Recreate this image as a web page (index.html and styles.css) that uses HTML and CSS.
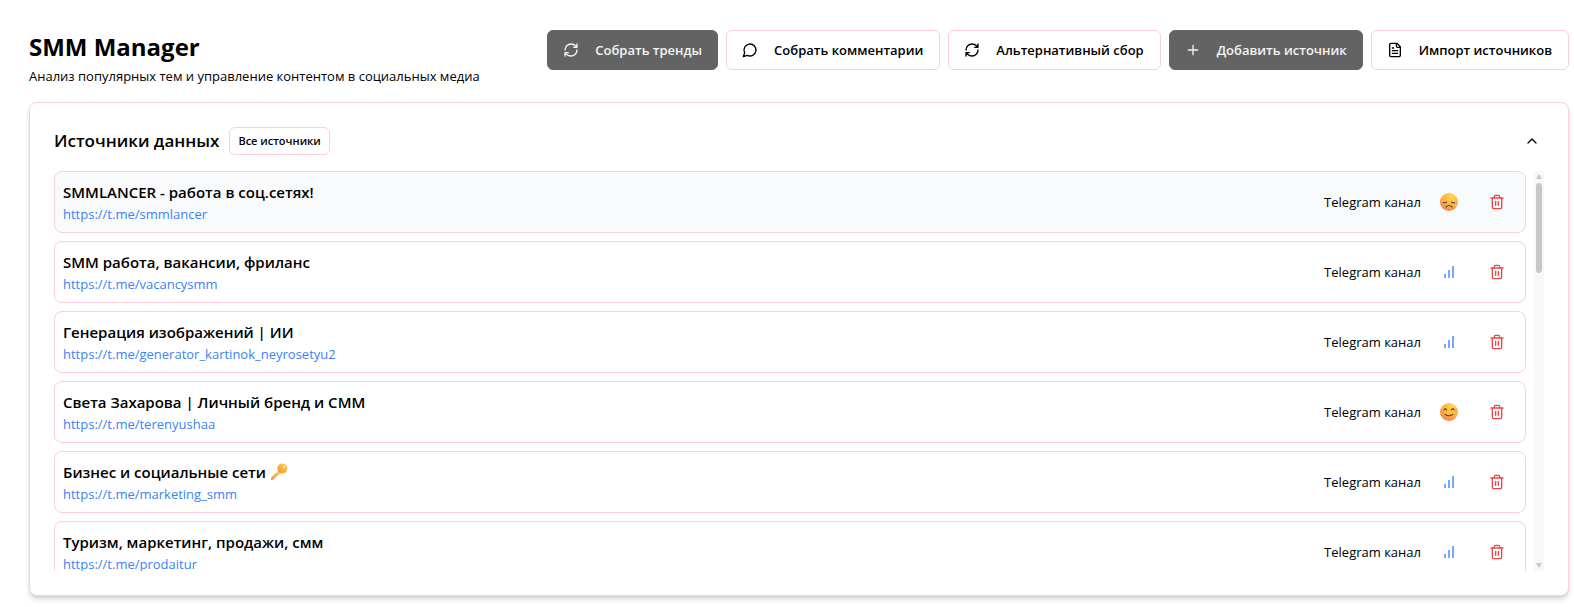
FILE: index.html
```html
<!DOCTYPE html>
<html lang="ru">
<head>
<meta charset="utf-8">
<title>SMM Manager</title>
<link rel="stylesheet" href="styles.css">
</head>
<body>
<svg class="defs" aria-hidden="true">
  <defs>
    <radialGradient id="face" cx="0.65" cy="0.2" r="0.95">
      <stop offset="0" stop-color="#ffd84a"/>
      <stop offset="0.55" stop-color="#fbb03f"/>
      <stop offset="1" stop-color="#ef6c6a"/>
    </radialGradient>
    <linearGradient id="gold" x1="1" y1="0" x2="0" y2="1">
      <stop offset="0" stop-color="#ffdc4a"/>
      <stop offset="0.5" stop-color="#fbb144"/>
      <stop offset="1" stop-color="#f2894e"/>
    </linearGradient>
    <symbol id="refresh" viewBox="0 0 24 24"><path d="M3 12a9 9 0 0 1 9-9 9.75 9.75 0 0 1 6.74 2.74L21 8M21 3v5h-5M21 12a9 9 0 0 1-9 9 9.75 9.75 0 0 1-6.74-2.74L3 16M8 16H3v5"/></symbol>
    <symbol id="comment" viewBox="0 0 24 24"><path d="M7.9 20A9 9 0 1 0 4 16.1L2 22Z"/></symbol>
    <symbol id="plus" viewBox="0 0 24 24"><path d="M5 12h14M12 5v14"/></symbol>
    <symbol id="file" viewBox="0 0 24 24"><path d="M15 2H6a2 2 0 0 0-2 2v16a2 2 0 0 0 2 2h12a2 2 0 0 0 2-2V7ZM14 2v4a2 2 0 0 0 2 2h4M10 9H8M16 13H8M16 17H8"/></symbol>
    <symbol id="chevron" viewBox="0 0 24 24"><path d="m18 15-6-6-6 6"/></symbol>
    <symbol id="trash" viewBox="0 0 24 24"><path d="M3 6h18M19 6v14c0 1-1 2-2 2H7c-1 0-2-1-2-2V6M8 6V4c0-1 1-2 2-2h4c1 0 2 1 2 2v2M10 11v6M14 11v6"/></symbol>
    <symbol id="bars" viewBox="0 0 16 16"><path d="M3 10h2v4H3zM7 6h2v8H7zM11 2h2v12h-2z"/></symbol>
    <symbol id="sad" viewBox="0 0 18 18">
      <circle cx="9" cy="9" r="9" fill="url(#face)"/>
      <path d="M3.4 9.6q1.8 1 3.2-.6M11.4 9q1.4 1.6 3.2.6M6 14q3-3 6 0" fill="none" stroke="#5a3340" stroke-width="1.1" stroke-linecap="round"/>
    </symbol>
    <symbol id="smile" viewBox="0 0 18 18">
      <circle cx="9" cy="9" r="9" fill="url(#face)"/>
      <path d="M3.8 7q1.4-2.4 2.8 0M11.4 7q1.4-2.4 2.8 0M5.2 11.4q3.8 2.8 7.6 0" fill="none" stroke="#5a3340" stroke-width="1.1" stroke-linecap="round"/>
    </symbol>
    <symbol id="key" viewBox="0 0 18 18">
      <path d="M9 7.2 1.2 14.6 1 17l3-.4.4-1.8 1.8-.2.2-1.6 1.6-.4 3-2.4z" fill="url(#gold)"/>
      <circle cx="12.4" cy="5.4" r="5" fill="url(#gold)"/>
      <circle cx="14" cy="3.8" r="1.1" fill="#fff3c4"/>
    </symbol>
  </defs>
</svg>
<main class="page">
  <header class="top">
    <div>
      <h1 class="heading">SMM Manager</h1>
      <p class="subtitle">Анализ популярных тем и управление контентом в социальных медиа</p>
    </div>
    <div class="actions">
      <button class="btn btn-dark"><svg class="icon"><use href="#refresh"/></svg>Собрать тренды</button>
      <button class="btn"><svg class="icon"><use href="#comment"/></svg>Собрать комментарии</button>
      <button class="btn"><svg class="icon"><use href="#refresh"/></svg>Альтернативный сбор</button>
      <button class="btn btn-dark"><svg class="icon"><use href="#plus"/></svg>Добавить источник</button>
      <button class="btn"><svg class="icon"><use href="#file"/></svg>Импорт источников</button>
    </div>
  </header>
  <section class="card">
    <div class="card-head">
      <h2 class="card-title">Источники данных</h2>
      <button class="filter">Все источники</button>
      <button class="toggle" aria-label="Свернуть"><svg class="icon"><use href="#chevron"/></svg></button>
    </div>
    <div class="scroller">
      <ul class="list">
        <li class="row row-active">
          <div class="info"><h3 class="name">SMMLANCER - работа в соц.сетях!</h3><a class="link" href="https://t.me/smmlancer">https://t.me/smmlancer</a></div>
          <span class="kind">Telegram канал</span>
          <button class="tool" aria-label="Настроение"><svg class="emoji"><use href="#sad"/></svg></button>
          <button class="tool tool-delete" aria-label="Удалить"><svg class="icon"><use href="#trash"/></svg></button>
        </li>
        <li class="row">
          <div class="info"><h3 class="name">SMM работа, вакансии, фриланс</h3><a class="link" href="https://t.me/vacancysmm">https://t.me/vacancysmm</a></div>
          <span class="kind">Telegram канал</span>
          <button class="tool" aria-label="Анализ"><svg class="icon bars"><use href="#bars"/></svg></button>
          <button class="tool tool-delete" aria-label="Удалить"><svg class="icon"><use href="#trash"/></svg></button>
        </li>
        <li class="row">
          <div class="info"><h3 class="name">Генерация изображений | ИИ</h3><a class="link" href="https://t.me/generator_kartinok_neyrosetyu2">https://t.me/generator_kartinok_neyrosetyu2</a></div>
          <span class="kind">Telegram канал</span>
          <button class="tool" aria-label="Анализ"><svg class="icon bars"><use href="#bars"/></svg></button>
          <button class="tool tool-delete" aria-label="Удалить"><svg class="icon"><use href="#trash"/></svg></button>
        </li>
        <li class="row">
          <div class="info"><h3 class="name">Света Захарова | Личный бренд и СММ</h3><a class="link" href="https://t.me/terenyushaa">https://t.me/terenyushaa</a></div>
          <span class="kind">Telegram канал</span>
          <button class="tool" aria-label="Настроение"><svg class="emoji"><use href="#smile"/></svg></button>
          <button class="tool tool-delete" aria-label="Удалить"><svg class="icon"><use href="#trash"/></svg></button>
        </li>
        <li class="row">
          <div class="info"><h3 class="name">Бизнес и социальные сети <svg class="emoji"><use href="#key"/></svg></h3><a class="link" href="https://t.me/marketing_smm">https://t.me/marketing_smm</a></div>
          <span class="kind">Telegram канал</span>
          <button class="tool" aria-label="Анализ"><svg class="icon bars"><use href="#bars"/></svg></button>
          <button class="tool tool-delete" aria-label="Удалить"><svg class="icon"><use href="#trash"/></svg></button>
        </li>
        <li class="row">
          <div class="info"><h3 class="name">Туризм, маркетинг, продажи, смм</h3><a class="link" href="https://t.me/prodaitur">https://t.me/prodaitur</a></div>
          <span class="kind">Telegram канал</span>
          <button class="tool" aria-label="Анализ"><svg class="icon bars"><use href="#bars"/></svg></button>
          <button class="tool tool-delete" aria-label="Удалить"><svg class="icon"><use href="#trash"/></svg></button>
        </li>
      </ul>
      <div class="scrollbar" aria-hidden="true">
        <span class="arrow arrow-up"></span>
        <span class="thumb"></span>
        <span class="arrow arrow-down"></span>
      </div>
    </div>
  </section>
</main>
</body>
</html>
```
FILE: styles.css
```css
* { box-sizing: border-box; }
body {
  margin: 0;
  background: #fff;
  color: #000;
  font-family: "Open Sans", "Noto Sans", sans-serif;
  font-size: 13px;
  line-height: 20px;
}
h1, h2, h3, p, ul { margin: 0; padding: 0; }
button { font: inherit; color: inherit; cursor: pointer; }
.defs { position: absolute; width: 0; height: 0; }
.page { padding: 30px 5px 12px 29px; }
.top {
  display: flex;
  justify-content: space-between;
  align-items: flex-start;
  margin-bottom: 16px;
}
.heading { font-size: 24px; line-height: 34px; font-weight: 700; }
.subtitle { padding-top: 2px; }
.actions { display: flex; gap: 8px; }
.btn {
  display: flex;
  align-items: center;
  gap: 16px;
  height: 40px;
  padding: 0 15px;
  border: 1px solid #fbcfdd;
  border-radius: 6px;
  background: #fff;
  font-weight: 600;
  white-space: nowrap;
}
.btn:not(.btn-dark) { padding-right: 16px; }
.btn-dark { background: #636363; border-color: #636363; color: #f4f4f4; }
.icon {
  width: 16px;
  height: 16px;
  flex: none;
  fill: none;
  stroke: currentColor;
  stroke-width: 2;
  stroke-linecap: round;
  stroke-linejoin: round;
}
.card {
  padding: 24px;
  border: 1px solid #fbcfdd;
  border-radius: 8px;
  background: #fff;
  box-shadow: 0 4px 6px -1px rgba(0, 0, 0, 0.15), 0 2px 4px -2px rgba(0, 0, 0, 0.15);
}
.card-head { display: flex; align-items: center; gap: 10px; margin-bottom: 16px; }
.card-title { font-size: 17px; line-height: 28px; font-weight: 600; }
.filter {
  height: 28px;
  padding: 0 8px;
  border: 1px solid #fbcfdd;
  border-radius: 6px;
  background: #fff;
  font-size: 11px;
  font-weight: 600;
}
.toggle {
  display: flex;
  margin-left: auto;
  padding: 4px;
  border: 0;
  background: none;
}
.scroller { display: flex; gap: 8px; height: 400px; overflow: hidden; }
.list {
  flex: 1;
  display: flex;
  flex-direction: column;
  gap: 8px;
  list-style: none;
}
.row {
  display: flex;
  align-items: center;
  gap: 8px;
  flex: none;
  padding: 8px;
  border: 1px solid #fbcfdd;
  border-radius: 8px;
}
.row-active { background: #f9fafb; }
.info { flex: 1; }
.name { font-size: 15px; line-height: 24px; font-weight: 600; }
.link { display: block; color: #3b82f6; text-decoration: none; }
.tool {
  display: flex;
  align-items: center;
  justify-content: center;
  width: 40px;
  height: 40px;
  padding: 0;
  border: 0;
  background: none;
}
.tool-delete { color: #ef4444; }
.bars { fill: #76a8f9; stroke: none; }
.emoji { width: 18px; height: 18px; }
.name .emoji { vertical-align: -3px; }
.scrollbar {
  display: flex;
  flex-direction: column;
  align-items: center;
  width: 10px;
  padding: 3px 0;
  background: #f8f8f8;
}
.arrow { border: 3px solid transparent; }
.arrow-up { border-top: 0; border-bottom: 5px solid #c8c8c8; }
.arrow-down { margin-top: auto; border-bottom: 0; border-top: 5px solid #c8c8c8; }
.thumb { width: 6px; height: 90px; margin-top: 4px; border-radius: 3px; background: #c8c8c8; }
```
